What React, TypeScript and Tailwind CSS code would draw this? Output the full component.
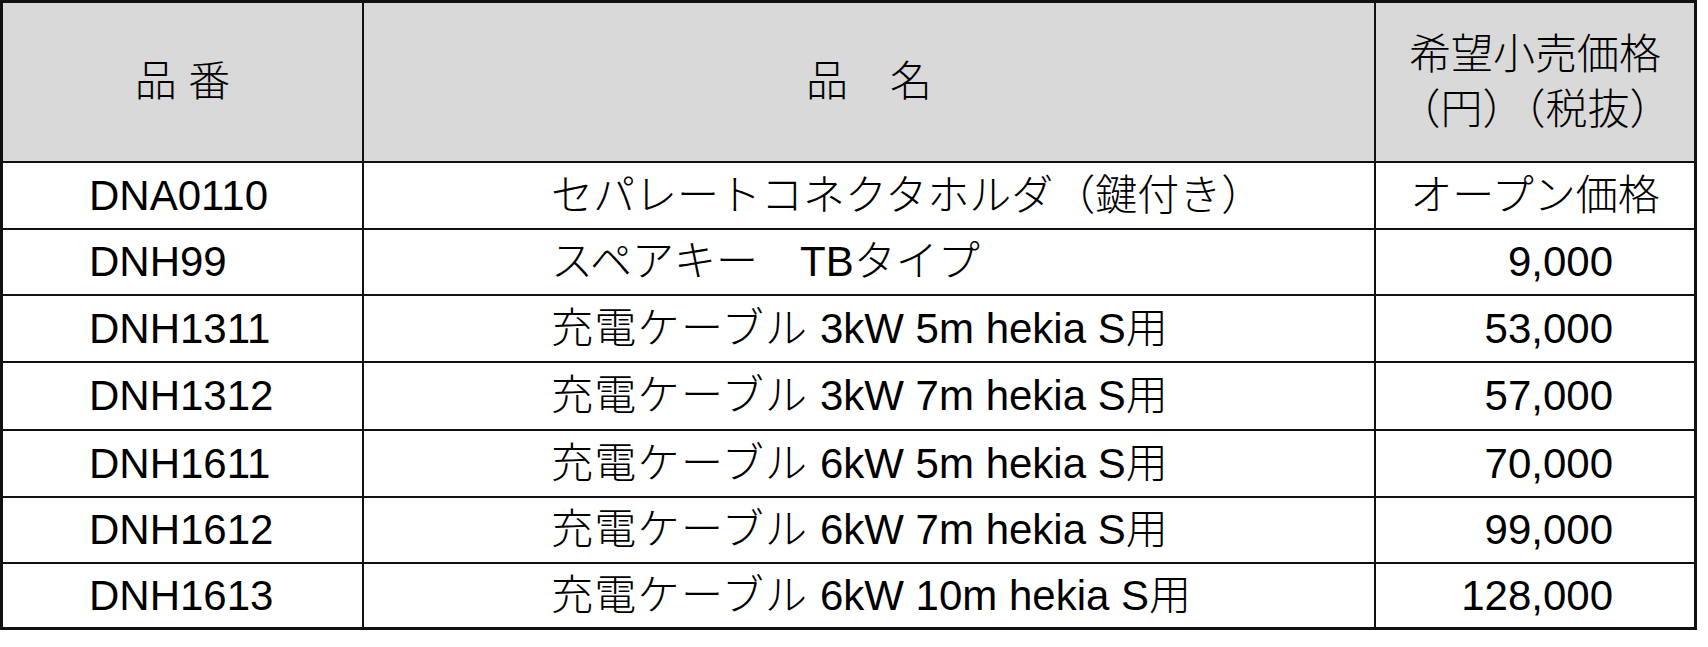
import React from 'react';

type Row = {
  code: string;
  name: string;
  spec?: string;
  price: string;
  open?: boolean;
  h: string;
};

const rows: Row[] = [
  { code: 'DNA0110', name: 'セパレートコネクタホルダ（鍵付き）', price: 'オープン価格', open: true, h: 'h-[67px]' },
  { code: 'DNH99', name: 'スペアキー　TBタイプ', price: '9,000', h: 'h-[66px]' },
  { code: 'DNH1311', name: '充電ケーブル', spec: ' 3kW 5m hekia S用', price: '53,000', h: 'h-[67px]' },
  { code: 'DNH1312', name: '充電ケーブル', spec: ' 3kW 7m hekia S用', price: '57,000', h: 'h-[68px]' },
  { code: 'DNH1611', name: '充電ケーブル', spec: ' 6kW 5m hekia S用', price: '70,000', h: 'h-[67px]' },
  { code: 'DNH1612', name: '充電ケーブル', spec: ' 6kW 7m hekia S用', price: '99,000', h: 'h-[66px]' },
  { code: 'DNH1613', name: '充電ケーブル', spec: ' 6kW 10m hekia S用', price: '128,000', h: 'h-[63px]' },
];

const App: React.FC = () => {
  return (
    <div className="w-[1708px] h-[647px] bg-white text-black font-['Liberation_Sans','Noto_Sans_CJK_JP',sans-serif] font-light text-[42px] leading-none">
      <div className="w-[1697px] border-[3px] border-[#111]">
        {/* Header */}
        <div className="grid grid-cols-[361px_1012px_318px] h-[160px] bg-[#d9d9d9] border-b-2 border-[#111]">
          <div className="flex items-center justify-center border-r-2 border-[#111]">品 番</div>
          <div className="flex items-center justify-center border-r-2 border-[#111]">品　名</div>
          <div className="flex flex-col items-center justify-center leading-[55px]">
            <span>希望小売価格</span>
            <span>（円）（税抜）</span>
          </div>
        </div>

        {/* Rows */}
        {rows.map((r, i) => (
          <div
            key={r.code}
            className={`grid grid-cols-[361px_1012px_318px] ${r.h} ${i < rows.length - 1 ? 'border-b-2 border-[#111]' : ''}`}
          >
            <div className="flex items-center pl-[86px] border-r-2 border-[#111]">{r.code}</div>
            <div className="flex items-center pl-[187px] border-r-2 border-[#111] whitespace-pre">
              {r.spec ? (
                <>
                  <span className="tracking-[1.3px]">{r.name}</span>
                  <span>{r.spec}</span>
                </>
              ) : (
                r.name
              )}
            </div>
            {r.open ? (
              <div className="flex items-center justify-center">{r.price}</div>
            ) : (
              <div className="flex items-center justify-end pr-[81px]">{r.price}</div>
            )}
          </div>
        ))}
      </div>
    </div>
  );
};

export default App;
